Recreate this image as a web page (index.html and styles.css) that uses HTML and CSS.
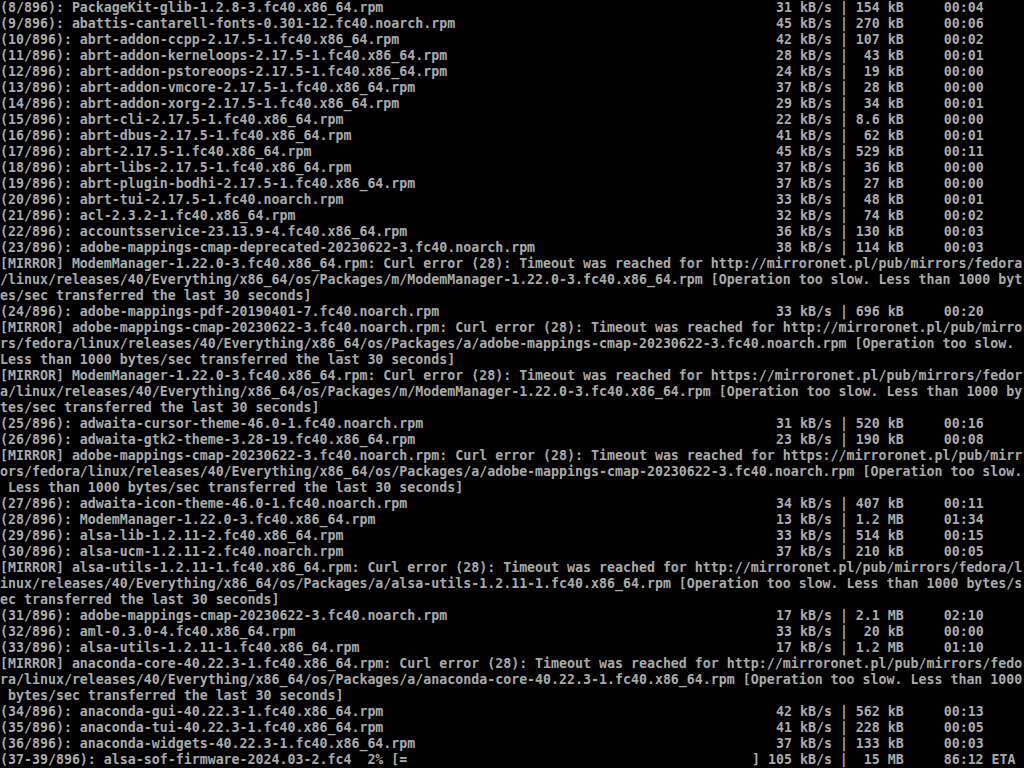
FILE: index.html
```html
<!DOCTYPE html>
<html lang="en">
<head>
<meta charset="utf-8">
<title>console</title>
<link rel="stylesheet" href="styles.css">
</head>
<body>
<main class="console">
<div class="ln p"><span>(8/896): PackageKit-glib-1.2.8-3.fc40.x86_64.rpm</span><span>31 kB/s | 154 kB     00:04</span></div>
<div class="ln p"><span>(9/896): abattis-cantarell-fonts-0.301-12.fc40.noarch.rpm</span><span>45 kB/s | 270 kB     00:06</span></div>
<div class="ln p"><span>(10/896): abrt-addon-ccpp-2.17.5-1.fc40.x86_64.rpm</span><span>42 kB/s | 107 kB     00:02</span></div>
<div class="ln p"><span>(11/896): abrt-addon-kerneloops-2.17.5-1.fc40.x86_64.rpm</span><span>28 kB/s |  43 kB     00:01</span></div>
<div class="ln p"><span>(12/896): abrt-addon-pstoreoops-2.17.5-1.fc40.x86_64.rpm</span><span>24 kB/s |  19 kB     00:00</span></div>
<div class="ln p"><span>(13/896): abrt-addon-vmcore-2.17.5-1.fc40.x86_64.rpm</span><span>37 kB/s |  28 kB     00:00</span></div>
<div class="ln p"><span>(14/896): abrt-addon-xorg-2.17.5-1.fc40.x86_64.rpm</span><span>29 kB/s |  34 kB     00:01</span></div>
<div class="ln p"><span>(15/896): abrt-cli-2.17.5-1.fc40.x86_64.rpm</span><span>22 kB/s | 8.6 kB     00:00</span></div>
<div class="ln p"><span>(16/896): abrt-dbus-2.17.5-1.fc40.x86_64.rpm</span><span>41 kB/s |  62 kB     00:01</span></div>
<div class="ln p"><span>(17/896): abrt-2.17.5-1.fc40.x86_64.rpm</span><span>45 kB/s | 529 kB     00:11</span></div>
<div class="ln p"><span>(18/896): abrt-libs-2.17.5-1.fc40.x86_64.rpm</span><span>37 kB/s |  36 kB     00:00</span></div>
<div class="ln p"><span>(19/896): abrt-plugin-bodhi-2.17.5-1.fc40.x86_64.rpm</span><span>37 kB/s |  27 kB     00:00</span></div>
<div class="ln p"><span>(20/896): abrt-tui-2.17.5-1.fc40.noarch.rpm</span><span>33 kB/s |  48 kB     00:01</span></div>
<div class="ln p"><span>(21/896): acl-2.3.2-1.fc40.x86_64.rpm</span><span>32 kB/s |  74 kB     00:02</span></div>
<div class="ln p"><span>(22/896): accountsservice-23.13.9-4.fc40.x86_64.rpm</span><span>36 kB/s | 130 kB     00:03</span></div>
<div class="ln p"><span>(23/896): adobe-mappings-cmap-deprecated-20230622-3.fc40.noarch.rpm</span><span>38 kB/s | 114 kB     00:03</span></div>
<div class="ln">[MIRROR] ModemManager-1.22.0-3.fc40.x86_64.rpm: Curl error (28): Timeout was reached for http://mirroronet.pl/pub/mirrors/fedora</div>
<div class="ln">/linux/releases/40/Everything/x86_64/os/Packages/m/ModemManager-1.22.0-3.fc40.x86_64.rpm [Operation too slow. Less than 1000 byt</div>
<div class="ln">es/sec transferred the last 30 seconds]</div>
<div class="ln p"><span>(24/896): adobe-mappings-pdf-20190401-7.fc40.noarch.rpm</span><span>33 kB/s | 696 kB     00:20</span></div>
<div class="ln">[MIRROR] adobe-mappings-cmap-20230622-3.fc40.noarch.rpm: Curl error (28): Timeout was reached for http://mirroronet.pl/pub/mirro</div>
<div class="ln">rs/fedora/linux/releases/40/Everything/x86_64/os/Packages/a/adobe-mappings-cmap-20230622-3.fc40.noarch.rpm [Operation too slow. </div>
<div class="ln">Less than 1000 bytes/sec transferred the last 30 seconds]</div>
<div class="ln">[MIRROR] ModemManager-1.22.0-3.fc40.x86_64.rpm: Curl error (28): Timeout was reached for https://mirroronet.pl/pub/mirrors/fedor</div>
<div class="ln">a/linux/releases/40/Everything/x86_64/os/Packages/m/ModemManager-1.22.0-3.fc40.x86_64.rpm [Operation too slow. Less than 1000 by</div>
<div class="ln">tes/sec transferred the last 30 seconds]</div>
<div class="ln p"><span>(25/896): adwaita-cursor-theme-46.0-1.fc40.noarch.rpm</span><span>31 kB/s | 520 kB     00:16</span></div>
<div class="ln p"><span>(26/896): adwaita-gtk2-theme-3.28-19.fc40.x86_64.rpm</span><span>23 kB/s | 190 kB     00:08</span></div>
<div class="ln">[MIRROR] adobe-mappings-cmap-20230622-3.fc40.noarch.rpm: Curl error (28): Timeout was reached for https://mirroronet.pl/pub/mirr</div>
<div class="ln">ors/fedora/linux/releases/40/Everything/x86_64/os/Packages/a/adobe-mappings-cmap-20230622-3.fc40.noarch.rpm [Operation too slow.</div>
<div class="ln"> Less than 1000 bytes/sec transferred the last 30 seconds]</div>
<div class="ln p"><span>(27/896): adwaita-icon-theme-46.0-1.fc40.noarch.rpm</span><span>34 kB/s | 407 kB     00:11</span></div>
<div class="ln p"><span>(28/896): ModemManager-1.22.0-3.fc40.x86_64.rpm</span><span>13 kB/s | 1.2 MB     01:34</span></div>
<div class="ln p"><span>(29/896): alsa-lib-1.2.11-2.fc40.x86_64.rpm</span><span>33 kB/s | 514 kB     00:15</span></div>
<div class="ln p"><span>(30/896): alsa-ucm-1.2.11-2.fc40.noarch.rpm</span><span>37 kB/s | 210 kB     00:05</span></div>
<div class="ln">[MIRROR] alsa-utils-1.2.11-1.fc40.x86_64.rpm: Curl error (28): Timeout was reached for http://mirroronet.pl/pub/mirrors/fedora/l</div>
<div class="ln">inux/releases/40/Everything/x86_64/os/Packages/a/alsa-utils-1.2.11-1.fc40.x86_64.rpm [Operation too slow. Less than 1000 bytes/s</div>
<div class="ln">ec transferred the last 30 seconds]</div>
<div class="ln p"><span>(31/896): adobe-mappings-cmap-20230622-3.fc40.noarch.rpm</span><span>17 kB/s | 2.1 MB     02:10</span></div>
<div class="ln p"><span>(32/896): aml-0.3.0-4.fc40.x86_64.rpm</span><span>33 kB/s |  20 kB     00:00</span></div>
<div class="ln p"><span>(33/896): alsa-utils-1.2.11-1.fc40.x86_64.rpm</span><span>17 kB/s | 1.2 MB     01:10</span></div>
<div class="ln">[MIRROR] anaconda-core-40.22.3-1.fc40.x86_64.rpm: Curl error (28): Timeout was reached for http://mirroronet.pl/pub/mirrors/fedo</div>
<div class="ln">ra/linux/releases/40/Everything/x86_64/os/Packages/a/anaconda-core-40.22.3-1.fc40.x86_64.rpm [Operation too slow. Less than 1000</div>
<div class="ln"> bytes/sec transferred the last 30 seconds]</div>
<div class="ln p"><span>(34/896): anaconda-gui-40.22.3-1.fc40.x86_64.rpm</span><span>42 kB/s | 562 kB     00:13</span></div>
<div class="ln p"><span>(35/896): anaconda-tui-40.22.3-1.fc40.x86_64.rpm</span><span>41 kB/s | 228 kB     00:05</span></div>
<div class="ln p"><span>(36/896): anaconda-widgets-40.22.3-1.fc40.x86_64.rpm</span><span>37 kB/s | 133 kB     00:03</span></div>
<div class="ln p last"><span>(37-39/896): alsa-sof-firmware-2024.03-2.fc4  2% [=</span><span>] 105 kB/s |  15 MB     86:12 ETA</span></div>
</main>
</body>
</html>
```
FILE: styles.css
```css
html, body {
  margin: 0;
  padding: 0;
  background: #000;
  width: 1024px;
  height: 768px;
  overflow: hidden;
}

.console {
  display: flex;
  flex-direction: column;
  color: #aaaaaa;
  font-family: "DejaVu Sans Mono", "Liberation Mono", monospace;
  font-size: 13.28px;
  font-weight: bold;
  line-height: 16px;
}

.ln {
  height: 16px;
  white-space: pre;
  overflow: hidden;
}

.ln.p {
  display: grid;
  grid-template-columns: 776px auto;
}

.ln.p.last {
  grid-template-columns: 752px auto;
}
```
